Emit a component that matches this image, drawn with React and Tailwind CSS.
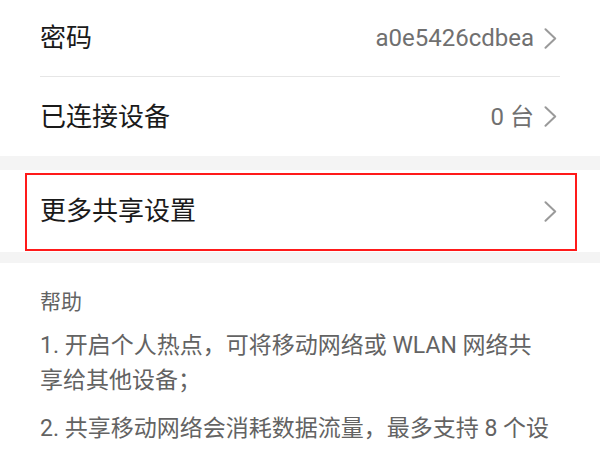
import React from "react";

const font = { fontFamily: '"Roboto", "Noto Sans CJK SC", sans-serif' };

function Chevron() {
  return (
    <svg width="13" height="21" viewBox="0 0 13 21" className="shrink-0">
      <path d="M1.5 1.2 L11.2 10.5 L1.5 19.8" fill="none" stroke="#9a9a9a" strokeWidth="2" strokeLinecap="round" strokeLinejoin="round" />
    </svg>
  );
}

function Row({ label, value, h }) {
  return (
    <div className={`flex items-center justify-between pl-[40px] pr-[43px] ${h}`}>
      <span className="text-[26px] text-[#1a1a1a] leading-none">{label}</span>
      <div className="flex items-center gap-[10px]">
        {value && <span className="text-[24px] text-[#707070] leading-none">{value}</span>}
        <Chevron />
      </div>
    </div>
  );
}

export default function App() {
  return (
    <div className="w-[600px] h-[450px] bg-white overflow-hidden" style={font}>
      <Row label="密码" value="a0e5426cdbea" h="h-[76px]" />
      <div className="mx-[40px] h-px bg-[#e6e6e6]" />
      <Row label="已连接设备" value="0 台" h="h-[79px]" />
      <div className="h-[14px] bg-[#f4f4f4]" />
      <div className="relative">
        <Row label="更多共享设置" h="h-[82px]" />
        <div className="absolute left-[25px] top-[3px] w-[552px] h-[78px] border-2 border-[#ff1a1a]" />
      </div>
      <div className="h-[11px] bg-[#f4f4f4]" />
      <div className="pl-[40px] pt-[25px] text-[#636363]">
        <div className="text-[21px] leading-[28px]">帮助</div>
        <div className="mt-[12px] text-[23px] leading-[35px] whitespace-nowrap">
          <div>1. 开启个人热点，可将移动网络或 WLAN 网络共</div>
          <div>享给其他设备；</div>
        </div>
        <div className="mt-[13px] text-[23px] leading-[35px] whitespace-nowrap">
          <div>2. 共享移动网络会消耗数据流量，最多支持 8 个设</div>
        </div>
      </div>
    </div>
  );
}
